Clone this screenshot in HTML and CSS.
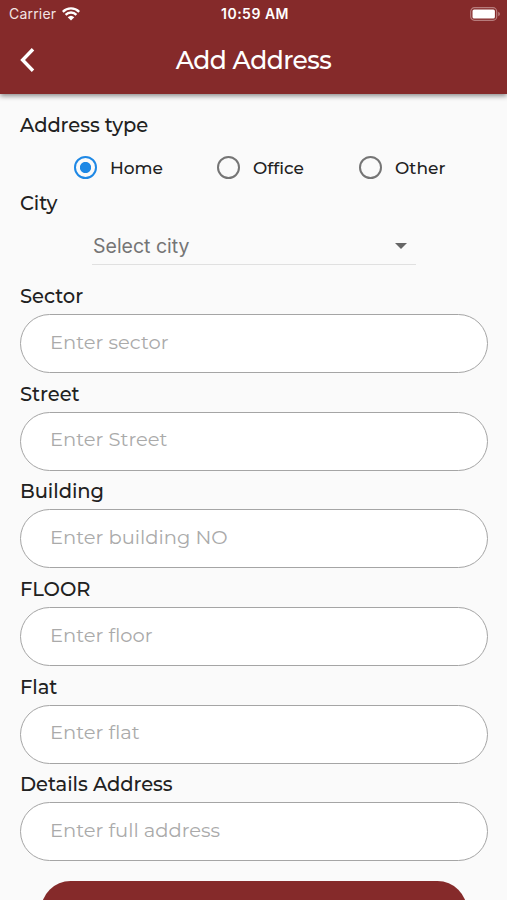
FILE: index.html
```html
<!DOCTYPE html>
<html lang="en">
<head>
    <meta charset="UTF-8">
    <meta name="viewport" content="width=device-width, initial-scale=1.0">
    <title>Add Address</title>
    <link rel="stylesheet" href="styles.css">
</head>
<body>
    <header class="header">
        <div class="status-bar">
            <div class="carrier">
                <span>Carrier</span>
                <svg class="wifi" width="18" height="14" viewBox="0 0 18 14">
                    <path d="M.8 4.8a11.6 11.6 0 0 1 16.4 0M3.6 7.8a7.6 7.6 0 0 1 10.8 0" fill="none" stroke="#fff" stroke-width="2.4"/>
                    <path d="M5.7 10.2a4.8 4.8 0 0 1 6.6 0L9 13.4z" fill="#fff"/>
                </svg>
            </div>
            <span class="clock">10:59 AM</span>
            <svg class="battery" width="31" height="14" viewBox="0 0 31 14">
                <rect x=".7" y=".7" width="26" height="12.6" rx="3.8" fill="none" stroke="#b77c7c" stroke-width="1.2"/>
                <rect x="2.5" y="2.5" width="22.4" height="9" rx="1.6" fill="#fff"/>
                <path d="M28.2 4.8q1.8 .8 1.8 2.2t-1.8 2.2z" fill="#b77c7c"/>
            </svg>
        </div>
        <div class="nav-bar">
            <button class="back" aria-label="Back">
                <svg width="16" height="24" viewBox="0 0 16 24">
                    <path d="M14 1.2 3.6 12 14 22.8" fill="none" stroke="#fff" stroke-width="3.4"/>
                </svg>
            </button>
            <h1>Add Address</h1>
        </div>
    </header>

    <form class="form">
        <h2 class="label">Address type</h2>
        <div class="types">
            <label class="type"><input type="radio" name="type" checked><span>Home</span></label>
            <label class="type"><input type="radio" name="type"><span>Office</span></label>
            <label class="type"><input type="radio" name="type"><span>Other</span></label>
        </div>

        <h2 class="label">City</h2>
        <div class="city">
            <span>Select city</span>
            <svg width="12" height="6" viewBox="0 0 12 6"><path d="M0 0h12L6 6z" fill="#666"/></svg>
        </div>

        <div class="field">
            <label class="label" for="sector">Sector</label>
            <input type="text" id="sector" placeholder="Enter sector">
        </div>
        <div class="field">
            <label class="label" for="street">Street</label>
            <input type="text" id="street" placeholder="Enter Street">
        </div>
        <div class="field">
            <label class="label" for="building">Building</label>
            <input type="text" id="building" placeholder="Enter building NO">
        </div>
        <div class="field">
            <label class="label" for="floor">FLOOR</label>
            <input type="text" id="floor" placeholder="Enter floor">
        </div>
        <div class="field">
            <label class="label" for="flat">Flat</label>
            <input type="text" id="flat" placeholder="Enter flat">
        </div>
        <div class="field">
            <label class="label" for="details">Details Address</label>
            <input type="text" id="details" placeholder="Enter full address">
        </div>

        <button type="button" class="save" aria-label="Save address"></button>
    </form>
</body>
</html>
```
FILE: styles.css
```css
* {
    box-sizing: border-box;
}
body {
    margin: 0;
    height: 900px;
    overflow: hidden;
    background-color: #fafafa;
    color: #212121;
    font-family: Montserrat, Inter, sans-serif;
}

/* Header */
.header {
    height: 94px;
    background-color: #852a2a;
    color: #fff;
    box-shadow: 0 2px 5px rgba(0, 0, 0, 0.45);
}
.status-bar {
    display: grid;
    grid-template-columns: 1fr auto 1fr;
    align-items: center;
    height: 27px;
    padding: 0 6px 0 9px;
    font-family: Inter, sans-serif;
    font-size: 14px;
}
.carrier {
    display: flex;
    align-items: center;
    gap: 6px;
    color: #f3e4e4;
    letter-spacing: 0.2px;
}
.clock {
    font-size: 14px;
    font-weight: 600;
    letter-spacing: 0.5px;
}
.battery {
    justify-self: end;
}
.nav-bar {
    display: grid;
    grid-template-columns: 40px 1fr 40px;
    align-items: center;
    height: 66px;
}
.back {
    display: flex;
    padding: 0 0 0 19px;
    border: none;
    background: none;
}
h1 {
    margin: 0;
    font-size: 25px;
    font-weight: 500;
    letter-spacing: -0.55px;
    text-align: center;
}

/* Form */
.form {
    padding: 19px 19px 0 20px;
}
.label {
    display: block;
    margin: 0;
    font-size: 19.5px;
    font-weight: 500;
    letter-spacing: -0.05px;
    line-height: 24px;
}
.types {
    display: grid;
    grid-template-columns: 143px 142px 1fr;
    align-items: center;
    height: 54px;
    padding: 10px 0 4px 54px;
}
.type {
    display: flex;
    align-items: center;
    gap: 13px;
    height: 22px;
    font-size: 17px;
    font-weight: 500;
}
.type span {
    padding-top: 2px;
}
.type input {
    appearance: none;
    width: 23px;
    height: 23px;
    margin: 0;
    border: 2.5px solid #757575;
    border-radius: 50%;
}
.type input:checked {
    border-color: #1e88e5;
    background: radial-gradient(circle, #1e88e5 5.2px, transparent 6px);
}
.city {
    display: flex;
    align-items: center;
    justify-content: space-between;
    width: 324px;
    height: 38px;
    margin: 12px 0 19px 72px;
    padding: 0 9px 0 1px;
    border-bottom: 1px solid #e0e0e0;
    color: #757575;
    font-family: Inter, sans-serif;
    font-size: 19.5px;
}
.field {
    height: 97.7px;
}
.field input {
    width: 100%;
    height: 59px;
    margin: 6px 0 0;
    padding: 0 29px 4px;
    border: 1.5px solid #a5a5a5;
    border-radius: 30px;
    background-color: #fff;
    font-family: inherit;
    font-size: 19.5px;
    outline: none;
}
.field input::placeholder {
    color: #aaa;
}
.save {
    display: block;
    width: 426px;
    height: 59px;
    margin: 11px 0 0 21px;
    border: none;
    border-radius: 30px;
    background-color: #852a2a;
}
```
